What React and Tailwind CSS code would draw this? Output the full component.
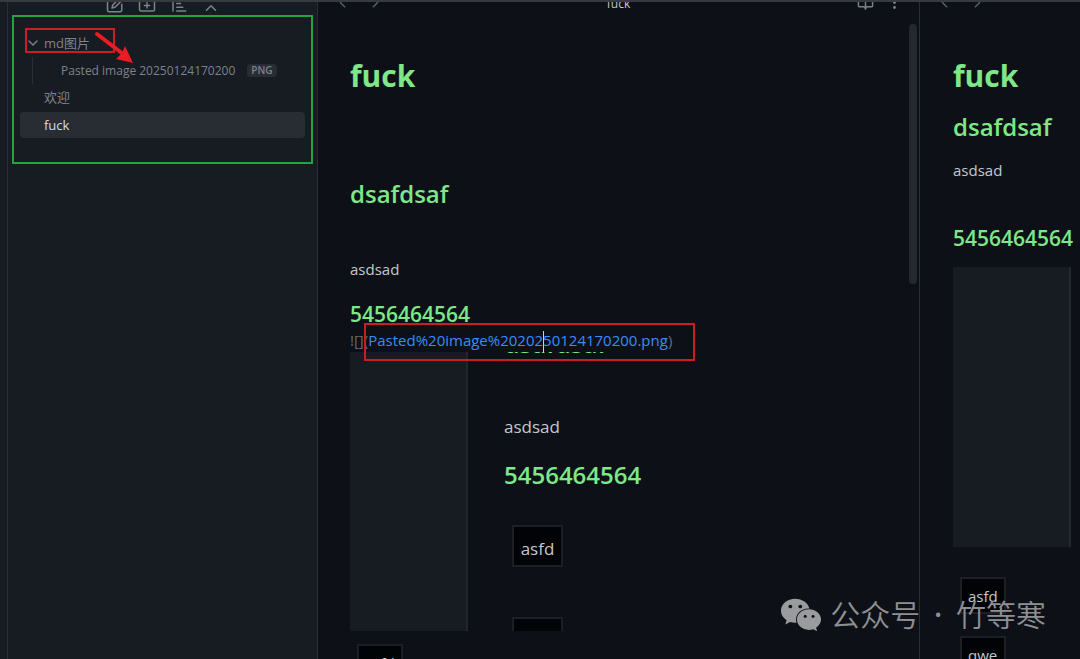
import { BookOpen, ChevronDown, ChevronLeft, ChevronRight, ChevronUp, EllipsisVertical } from "lucide-react";
import { FaWeixin } from "react-icons/fa";

const iconProps = {
  width: 18,
  height: 18,
  viewBox: "0 0 24 24",
  fill: "none",
  stroke: "currentColor",
  strokeWidth: 2,
  strokeLinecap: "round",
  strokeLinejoin: "round",
};

const NewNoteIcon = () => (
  <svg {...iconProps}>
    <path d="M12 3H4a2 2 0 0 0-2 2v14a2 2 0 0 0 2 2h15a2 2 0 0 0 2-2v-8" />
    <path d="M18 3l3 3-9 9-4 1 1-4z" />
  </svg>
);

const NewFolderIcon = () => (
  <svg {...iconProps}>
    <path d="M4 20h16a2 2 0 0 0 2-2V8a2 2 0 0 0-2-2h-8l-2-3H4a2 2 0 0 0-2 2v13a2 2 0 0 0 2 2z" />
    <path d="M12 9v7M8.500 12.500h7" />
  </svg>
);

const SortIcon = () => (
  <svg {...iconProps}>
    <path d="M4 3v17M9 5h3M9 10h5M9 15h8M9 20h12" />
  </svg>
);

const TreeToolbar = () => (
  <div className="flex h-[12px] items-end justify-center gap-[14px] overflow-hidden text-[#7d838b]">
    <button aria-label="New note">
      <NewNoteIcon />
    </button>
    <button aria-label="New folder">
      <NewFolderIcon />
    </button>
    <button aria-label="Sort">
      <SortIcon />
    </button>
    <button aria-label="Collapse all" className="self-center">
      <ChevronUp size={18} />
    </button>
  </div>
);

// Arrow that points from the folder to the pasted attachment
const Arrow = () => (
  <svg className="absolute top-[14px] left-[79px]" width="42" height="34" viewBox="0 0 42 34">
    <path d="M4 3L30 23" stroke="#ed1c24" strokeWidth="4" strokeLinecap="round" />
    <path d="M40 32L23 28L29 22L32 15z" fill="#ed1c24" />
  </svg>
);

const Sidebar = () => (
  <aside className="w-[311px] shrink-0 border-x border-[#2a2f36] bg-[#171b22]">
    <TreeToolbar />
    <nav className="relative mx-1 mt-px h-[149px] border-2 border-[#25a244] px-[6px] pt-[11px] text-[13px] text-[#7d838b]">
      <button className="ml-[5px] flex h-[25px] w-[90px] items-center border-2 border-[#c81e24] pt-1 leading-5">
        <ChevronDown size={16} className="-ml-0.5 shrink-0" />
        <span className="pl-[3px]">md图片</span>
      </button>
      <div className="mt-1 ml-[12px] flex h-[27px] items-center border-l border-[#2a2f36] pl-[28px]">
        <button className="text-[12px]">Pasted image 20250124170200</button>
        <span className="ml-3 rounded bg-[#282d34] px-1 text-[10px] leading-[13px] font-semibold">PNG</span>
      </div>
      <button className="block h-[28px] w-full px-6 text-left">欢迎</button>
      <button className="block h-[26px] w-full rounded bg-[#282d34] px-6 pt-0.5 text-left text-[#dadde1]">fuck</button>
      <Arrow />
    </nav>
  </aside>
);

const PaneArrows = () => (
  <div className="flex gap-4 text-[#5a6068]">
    <button aria-label="Back">
      <ChevronLeft size={17} />
    </button>
    <button aria-label="Forward">
      <ChevronRight size={17} />
    </button>
  </div>
);

const H1 = ({ className, children }) => (
  <h1 className={`text-[30px] leading-10 font-bold text-[#7ee787] ${className}`}>{children}</h1>
);

const H2 = ({ className, children }) => (
  <h2 className={`text-[24px] leading-8 font-semibold text-[#7ee787] ${className}`}>{children}</h2>
);

const H3 = ({ className, children }) => (
  <h3 className={`text-[21px] leading-7 font-semibold text-[#7ee787] ${className}`}>{children}</h3>
);

const NoteTable = ({ rows, className }) => (
  <table className={`border-separate border-spacing-0 ${className}`}>
    <tbody>
      {rows.map((row, i) => (
        <tr key={row}>
          <td className={i > 0 ? "pt-[22px]" : ""}>
            <div className="h-[37px] border-2 border-[#1c2026] bg-[#010307] px-1.5 pt-[5px] leading-6">{row}</div>
          </td>
        </tr>
      ))}
    </tbody>
  </table>
);

// The pasted picture is itself a capture of the same note
const PastedImage = () => (
  <div className="flex h-[279px] overflow-hidden">
    <div className="w-[118px] shrink-0 border-r-2 border-[#20242b] bg-[#171b22]" />
    <div className="pl-9 text-[17px]">
      <h2 className="-mt-[25px] text-[25px] leading-8 font-semibold text-[#7ee787]">dsafdsaf</h2>
      <p className="mt-[56px] leading-6">asdsad</p>
      <h3 className="mt-[22px] text-[24px] leading-7 font-semibold text-[#7ee787]">5456464564</h3>
      <div className="mt-9 ml-2 h-[42px] w-[51px] border-2 border-[#1c2026] bg-[#010307] pt-2 text-center leading-7">
        asfd
      </div>
      <div className="mt-[50px] ml-2 h-[42px] w-[51px] border-2 border-[#1c2026] bg-[#010307]" />
    </div>
  </div>
);

const Editor = () => (
  <main className="flex min-w-0 flex-1 flex-col border-r border-[#2a2f36]">
    <header className="grid h-[9px] shrink-0 grid-cols-3 grid-rows-1 items-end overflow-hidden px-4 text-[12px] leading-[14px]">
      <PaneArrows />
      <span className="text-center">fuck</span>
      <div className="flex justify-end gap-3 text-[#7d838b]">
        <button aria-label="Reading view">
          <BookOpen size={17} />
        </button>
        <button aria-label="More options">
          <EllipsisVertical size={17} />
        </button>
      </div>
    </header>
    <div className="flex min-h-0 flex-1">
      <article className="min-w-0 flex-1 overflow-hidden pl-8">
        <H1 className="mt-[45px]">fuck</H1>
        <H2 className="mt-[82px]">dsafdsaf</H2>
        <p className="mt-[47px] leading-6">asdsad</p>
        <H3 className="mt-[19px]">5456464564</H3>
        <p className="relative h-6 leading-6 whitespace-nowrap text-[#666b73]">
          ![](
          <a href="#pasted-image" className="text-[#388bfd]">
            Pasted%20image%20202
            <span className="-mr-px inline-block h-[22px] w-px bg-[#c9d1d9] align-middle" />
            50124170200.png
          </a>
          )
          <span className="absolute -top-[5px] left-[14px] h-[38px] w-[331px] border-2 border-[#c81e24]" />
        </p>
        <PastedImage />
        <NoteTable rows={["asfd"]} className="mt-[13px] ml-[7px]" />
      </article>
      <div className="mt-[13px] mr-0.5 h-[260px] w-2 rounded-full bg-[#24282f]" />
    </div>
  </main>
);

const Preview = () => (
  <section className="flex w-[160px] shrink-0 flex-col overflow-hidden">
    <header className="flex h-[9px] shrink-0 items-end overflow-hidden px-4">
      <PaneArrows />
    </header>
    <article className="pl-[33px]">
      <H1 className="mt-[45px]">fuck</H1>
      <H2 className="mt-[15px]">dsafdsaf</H2>
      <p className="mt-[15px] leading-6">asdsad</p>
      <H3 className="mt-[42px]">5456464564</H3>
      <div className="mt-[15px] h-[280px] w-[118px] border-r-2 border-[#24282f] bg-[#171b22]" />
      <NoteTable rows={["asfd", "qwe"]} className="mt-[30px] ml-[7px]" />
    </article>
  </section>
);

const Watermark = () => (
  <div className="absolute right-[34px] bottom-[22px] flex items-center gap-2 text-[30px] leading-[44px] font-[350] text-[#8d8f92]">
    <FaWeixin size={42} className="text-[#9a9b9d]" />
    <span>
      公众号 <span className="mx-1.5 font-semibold">·</span> 竹等寒
    </span>
  </div>
);

const App = () => (
  <div className="relative flex h-screen overflow-hidden border-t-2 border-[#363b42] bg-[#0d1117] font-['Open_Sans','Noto_Sans_CJK_SC',sans-serif] text-[15px] text-[#c3c8ce]">
    <div className="w-[7px] shrink-0 bg-[#171b22]" />
    <Sidebar />
    <Editor />
    <Preview />
    <Watermark />
  </div>
);

export default App;
